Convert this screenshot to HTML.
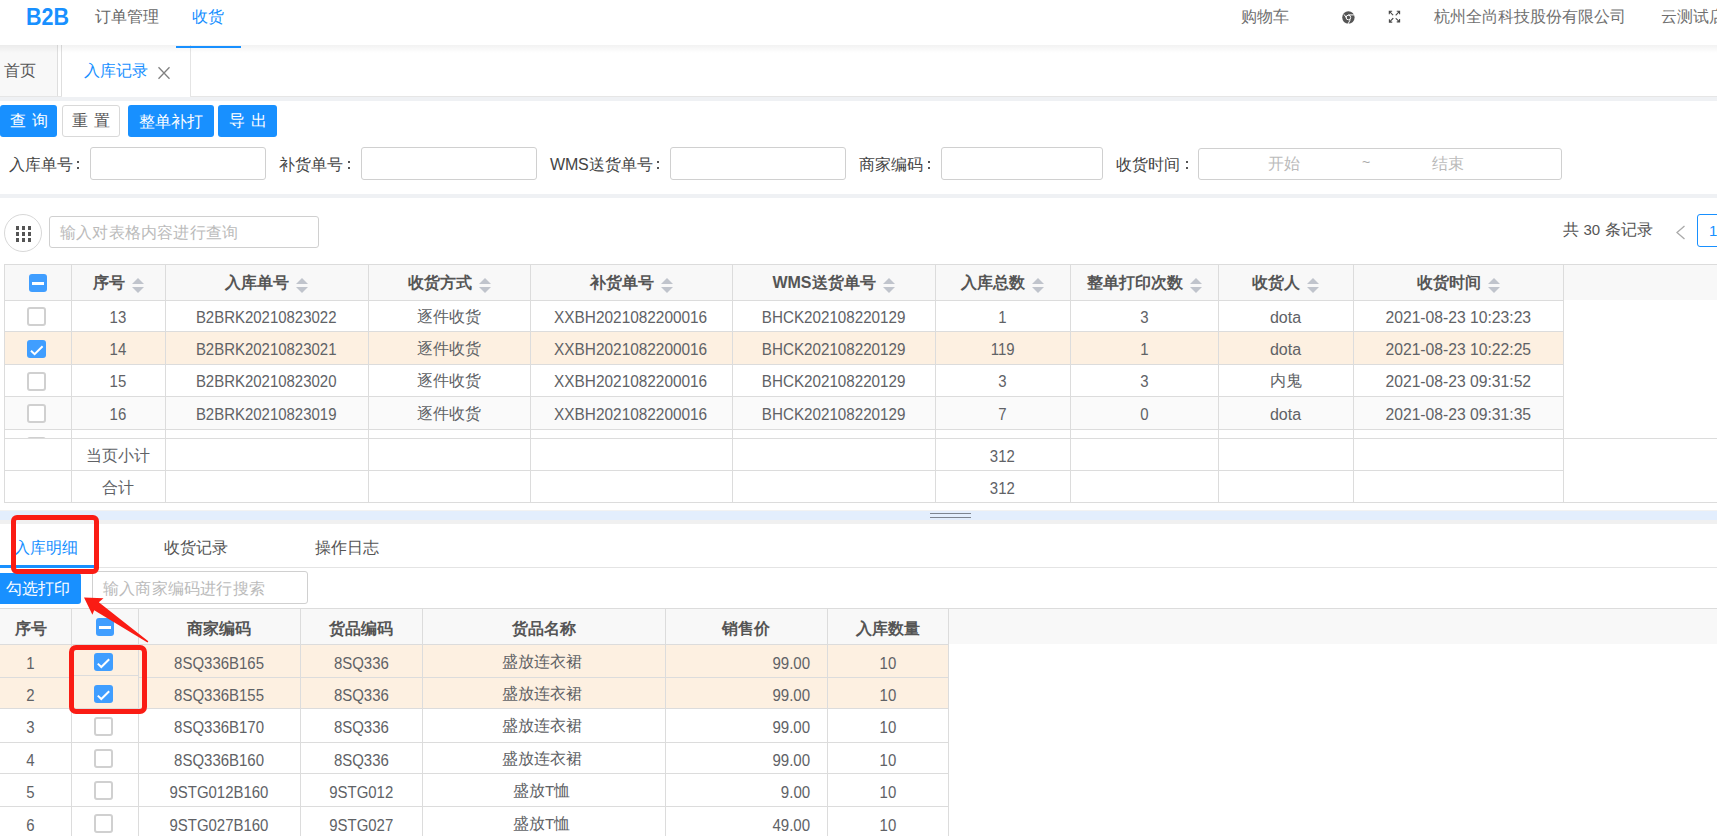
<!DOCTYPE html><html><head><meta charset="utf-8"><style>
html,body{margin:0;padding:0;}
body{width:1717px;height:836px;overflow:hidden;position:relative;background:#fff;font-family:"Liberation Sans",sans-serif;font-size:16px;color:#606266;}
.l{font-size:15px}
.sort{position:absolute;width:12px;height:15px}
.sort:before{content:"";position:absolute;left:0;top:0;border-left:6px solid transparent;border-right:6px solid transparent;border-bottom:6px solid #c0c4cc}
.sort:after{content:"";position:absolute;left:0;top:9px;border-left:6px solid transparent;border-right:6px solid transparent;border-top:6px solid #c0c4cc}
.cb{position:absolute;width:14.6px;height:14.6px;border:2px solid #d0d0d0;border-radius:3px;background:#fff}
.cbk{position:absolute;width:18px;height:18px;border-radius:3px;background:#409eff}
.cbm{position:absolute;width:18px;height:18px;border-radius:3px;background:#409eff}
.cbm:after{content:"";position:absolute;left:3px;top:8px;width:12px;height:3px;background:#fff}
</style></head><body>
<div style="position:absolute;left:26px;top:0px;width:60px;height:34px;line-height:34px;text-align:left;white-space:nowrap;font-weight:bold;font-size:23.5px;color:#1890ff;transform:scaleX(0.915);transform-origin:0 0;">B2B</div>
<div style="position:absolute;left:95px;top:0px;width:70px;height:33px;line-height:33px;text-align:left;white-space:nowrap;color:#666;">订单管理</div>
<div style="position:absolute;left:192px;top:0px;width:40px;height:33px;line-height:33px;text-align:left;white-space:nowrap;color:#1890ff;">收货</div>
<div style="position:absolute;left:1241px;top:0px;width:60px;height:33px;line-height:33px;text-align:left;white-space:nowrap;color:#707070;">购物车</div>
<div style="position:absolute;left:1434px;top:0px;width:200px;height:33px;line-height:33px;text-align:left;white-space:nowrap;color:#707070;">杭州全尚科技股份有限公司</div>
<div style="position:absolute;left:1661px;top:0px;width:80px;height:33px;line-height:33px;text-align:left;white-space:nowrap;color:#707070;">云测试店</div>
<svg style="position:absolute;left:1342px;top:10.5px" width="13" height="13" viewBox="0 0 13 13">
<circle cx="6.4" cy="6.5" r="6.2" fill="#555"/>
<circle cx="6.4" cy="6.5" r="2.3" fill="none" stroke="#fff" stroke-width="1"/>
<path d="M2 3.4 L4.6 6.9 M6.2 3.9 L12.6 3.9 M6.0 13 L8.3 8.6" stroke="#fff" stroke-width="1" fill="none"/>
</svg>
<svg style="position:absolute;left:1388px;top:10px" width="13" height="14" viewBox="0 0 13 14">
<g stroke="#4a4a4a" stroke-width="1.1" fill="none" stroke-linecap="square">
<path d="M1.6 1.6 L4.8 4.8 M1.3 1.3 L3.6 1.3 M1.3 1.3 L1.3 3.6"/>
<path d="M11.3 1.6 L8.1 4.9 M11.6 1.3 L9.3 1.3 M11.6 1.3 L11.6 3.6"/>
<path d="M1.7 11.8 L4.9 8.5 M1.4 12.1 L3.7 12.1 M1.4 12.1 L1.4 9.8"/>
<path d="M11.3 11.6 L8.1 8.7 M11.6 11.9 L9.3 11.9 M11.6 11.9 L11.6 9.6"/>
</g></svg>
<div style="position:absolute;left:0px;top:45px;width:1717px;height:51px;background:#fff;"></div>
<div style="position:absolute;left:0px;top:45px;width:57px;height:51px;background:#f8f8f8;"></div>
<div style="position:absolute;left:57px;top:45px;width:1px;height:51px;background:#dedede;"></div>
<div style="position:absolute;left:61px;top:45px;width:1px;height:51px;background:#dedede;"></div>
<div style="position:absolute;left:62px;top:45px;width:128px;height:51px;background:#fff;"></div>
<div style="position:absolute;left:190px;top:45px;width:1px;height:51px;background:#e4e4e4;"></div>
<div style="position:absolute;left:0px;top:45px;width:1717px;height:8px;background:linear-gradient(rgba(0,0,0,0.05),rgba(0,0,0,0));"></div>
<div style="position:absolute;left:176px;top:46px;width:65px;height:2px;background:#1890ff;"></div>
<div style="position:absolute;left:4px;top:45px;width:50px;height:51px;line-height:51px;text-align:left;white-space:nowrap;color:#555;">首页</div>
<div style="position:absolute;left:84px;top:45px;width:70px;height:51px;line-height:51px;text-align:left;white-space:nowrap;color:#1890ff;">入库记录</div>
<svg style="position:absolute;left:157px;top:66px" width="14" height="14" viewBox="0 0 14 14"><path d="M1.5 1.3 L12.5 12.7 M12.5 1.3 L1.5 12.7" stroke="#808080" stroke-width="1.3" fill="none"/></svg>
<div style="position:absolute;left:0px;top:97px;width:1717px;height:4px;background:#eff1f4;"></div>
<div style="position:absolute;left:0px;top:96px;width:62px;height:1px;background:#e6e6e6;"></div>
<div style="position:absolute;left:190px;top:96px;width:1527px;height:1px;background:#e6e6e6;"></div>
<div style="position:absolute;left:0px;top:105px;width:57px;height:32px;line-height:32px;background:#1890ff;border-radius:3px;color:#fff;text-align:center;letter-spacing:6px;text-indent:6px">查询</div>
<div style="position:absolute;left:62px;top:105px;width:56px;height:30px;line-height:30px;border:1px solid #d9d9d9;border-radius:3px;color:#555;text-align:center;letter-spacing:6px;text-indent:6px">重置</div>
<div style="position:absolute;left:128px;top:105px;width:86px;height:32px;line-height:32px;background:#1890ff;border-radius:3px;color:#fff;text-align:center;letter-spacing:0px;text-indent:0px"><span style="position:relative;top:1px">整单补打</span></div>
<div style="position:absolute;left:218px;top:105px;width:59px;height:32px;line-height:32px;background:#1890ff;border-radius:3px;color:#fff;text-align:center;letter-spacing:6px;text-indent:6px">导出</div>
<div style="position:absolute;left:9px;top:148px;width:120px;height:33px;line-height:33px;text-align:left;white-space:nowrap;color:#444;">入库单号</div>
<div style="position:absolute;left:77px;top:161px;width:2px;height:2px;background:#555;"></div>
<div style="position:absolute;left:77px;top:167px;width:2px;height:2px;background:#555;"></div>
<div style="position:absolute;left:90px;top:147px;width:174px;height:31px;border:1px solid #d0d0d0;border-radius:3px;background:#fff;"></div>
<div style="position:absolute;left:279px;top:148px;width:120px;height:33px;line-height:33px;text-align:left;white-space:nowrap;color:#444;">补货单号</div>
<div style="position:absolute;left:347.5px;top:161px;width:2px;height:2px;background:#555;"></div>
<div style="position:absolute;left:347.5px;top:167px;width:2px;height:2px;background:#555;"></div>
<div style="position:absolute;left:361px;top:147px;width:174px;height:31px;border:1px solid #d0d0d0;border-radius:3px;background:#fff;"></div>
<div style="position:absolute;left:550px;top:148px;width:120px;height:33px;line-height:33px;text-align:left;white-space:nowrap;color:#444;"><span style="letter-spacing:-0.2px">WMS</span>送货单号</div>
<div style="position:absolute;left:657px;top:161px;width:2px;height:2px;background:#555;"></div>
<div style="position:absolute;left:657px;top:167px;width:2px;height:2px;background:#555;"></div>
<div style="position:absolute;left:670px;top:147px;width:174px;height:31px;border:1px solid #d0d0d0;border-radius:3px;background:#fff;"></div>
<div style="position:absolute;left:859px;top:148px;width:120px;height:33px;line-height:33px;text-align:left;white-space:nowrap;color:#444;">商家编码</div>
<div style="position:absolute;left:928px;top:161px;width:2px;height:2px;background:#555;"></div>
<div style="position:absolute;left:928px;top:167px;width:2px;height:2px;background:#555;"></div>
<div style="position:absolute;left:941px;top:147px;width:160px;height:31px;border:1px solid #d0d0d0;border-radius:3px;background:#fff;"></div>
<div style="position:absolute;left:1116px;top:148px;width:120px;height:33px;line-height:33px;text-align:left;white-space:nowrap;color:#444;">收货时间</div>
<div style="position:absolute;left:1185.5px;top:161px;width:2px;height:2px;background:#555;"></div>
<div style="position:absolute;left:1185.5px;top:167px;width:2px;height:2px;background:#555;"></div>
<div style="position:absolute;left:1198px;top:148px;width:362px;height:30px;border:1px solid #d0d0d0;border-radius:3px;background:#fff;"></div>
<div style="position:absolute;left:1268px;top:148px;width:34px;height:32px;line-height:32px;text-align:left;white-space:nowrap;color:#bbb;">开始</div>
<div style="position:absolute;left:1362px;top:146px;width:14px;height:32px;line-height:32px;text-align:left;white-space:nowrap;color:#aaa;font-size:14px;">~</div>
<div style="position:absolute;left:1432px;top:148px;width:34px;height:32px;line-height:32px;text-align:left;white-space:nowrap;color:#bbb;">结束</div>
<div style="position:absolute;left:0px;top:194px;width:1717px;height:4px;background:#eff1f4;"></div>
<div style="position:absolute;left:4px;top:214px;width:36px;height:36px;border:1px solid #d8d8d8;border-radius:50%;"></div>
<div style="position:absolute;left:16px;top:226px;width:3px;height:4px;background:#555;"></div>
<div style="position:absolute;left:16px;top:232px;width:3px;height:4px;background:#555;"></div>
<div style="position:absolute;left:16px;top:238px;width:3px;height:4px;background:#555;"></div>
<div style="position:absolute;left:22px;top:226px;width:3px;height:4px;background:#555;"></div>
<div style="position:absolute;left:22px;top:232px;width:3px;height:4px;background:#555;"></div>
<div style="position:absolute;left:22px;top:238px;width:3px;height:4px;background:#555;"></div>
<div style="position:absolute;left:28px;top:226px;width:3px;height:4px;background:#555;"></div>
<div style="position:absolute;left:28px;top:232px;width:3px;height:4px;background:#555;"></div>
<div style="position:absolute;left:28px;top:238px;width:3px;height:4px;background:#555;"></div>
<div style="position:absolute;left:49px;top:216px;width:268px;height:30px;border:1px solid #d0d0d0;border-radius:3px;background:#fff;"></div>
<div style="position:absolute;left:60px;top:217px;width:200px;height:32px;line-height:32px;text-align:left;white-space:nowrap;color:#bbb;letter-spacing:0.2px;">输入对表格内容进行查询</div>
<div style="position:absolute;left:1563px;top:214px;width:100px;height:32px;line-height:32px;text-align:left;white-space:nowrap;color:#555;">共 <span class="l">30</span> 条记录</div>
<svg style="position:absolute;left:1675px;top:225px" width="11" height="15" viewBox="0 0 11 15"><path d="M9.5 1 L2 7.5 L9.5 14" stroke="#aaa" stroke-width="1.3" fill="none"/></svg>
<div style="position:absolute;left:1697px;top:214px;width:40px;height:31px;border:1px solid #1890ff;border-radius:3px;"></div>
<div style="position:absolute;left:1709px;top:214px;width:20px;height:33px;line-height:33px;text-align:left;white-space:nowrap;color:#1890ff;font-size:15px">1</div>
<div style="position:absolute;left:4px;top:264px;width:1713px;height:36px;background:#f8f8f8;"></div>
<div style="position:absolute;left:4px;top:331px;width:1559px;height:33px;background:#fdf0e1;"></div>
<div style="position:absolute;left:4px;top:396px;width:1559px;height:33px;background:#fafafa;"></div>
<div style="position:absolute;left:4px;top:264px;width:1713px;height:1px;background:#dcdcdc;"></div>
<div style="position:absolute;left:4px;top:300px;width:1559px;height:1px;background:#dcdcdc;"></div>
<div style="position:absolute;left:4px;top:331px;width:1559px;height:1px;background:#dcdcdc;"></div>
<div style="position:absolute;left:4px;top:364px;width:1559px;height:1px;background:#dcdcdc;"></div>
<div style="position:absolute;left:4px;top:396px;width:1559px;height:1px;background:#dcdcdc;"></div>
<div style="position:absolute;left:4px;top:429px;width:1559px;height:1px;background:#dcdcdc;"></div>
<div style="position:absolute;left:4px;top:438px;width:1713px;height:1px;background:#dcdcdc;"></div>
<div style="position:absolute;left:4px;top:470px;width:1559px;height:1px;background:#dcdcdc;"></div>
<div style="position:absolute;left:4px;top:502px;width:1713px;height:1px;background:#dcdcdc;"></div>
<div style="position:absolute;left:4px;top:264px;width:1px;height:239px;background:#dcdcdc;"></div>
<div style="position:absolute;left:71px;top:264px;width:1px;height:239px;background:#dcdcdc;"></div>
<div style="position:absolute;left:165px;top:264px;width:1px;height:239px;background:#dcdcdc;"></div>
<div style="position:absolute;left:368px;top:264px;width:1px;height:239px;background:#dcdcdc;"></div>
<div style="position:absolute;left:530px;top:264px;width:1px;height:239px;background:#dcdcdc;"></div>
<div style="position:absolute;left:732px;top:264px;width:1px;height:239px;background:#dcdcdc;"></div>
<div style="position:absolute;left:935px;top:264px;width:1px;height:239px;background:#dcdcdc;"></div>
<div style="position:absolute;left:1070px;top:264px;width:1px;height:239px;background:#dcdcdc;"></div>
<div style="position:absolute;left:1218px;top:264px;width:1px;height:239px;background:#dcdcdc;"></div>
<div style="position:absolute;left:1353px;top:264px;width:1px;height:239px;background:#dcdcdc;"></div>
<div style="position:absolute;left:1563px;top:264px;width:1px;height:239px;background:#dcdcdc;"></div>
<div style="position:absolute;left:71px;top:265px;width:94px;height:36px;line-height:36px;text-align:center;white-space:nowrap;font-weight:bold;color:#555;">序号<span style="display:inline-block;position:relative;width:12px;height:15px;margin-left:7px;vertical-align:-5px"><span class="sort" style="left:0;top:0"></span></span></div>
<div style="position:absolute;left:165px;top:265px;width:203px;height:36px;line-height:36px;text-align:center;white-space:nowrap;font-weight:bold;color:#555;">入库单号<span style="display:inline-block;position:relative;width:12px;height:15px;margin-left:7px;vertical-align:-5px"><span class="sort" style="left:0;top:0"></span></span></div>
<div style="position:absolute;left:368px;top:265px;width:162px;height:36px;line-height:36px;text-align:center;white-space:nowrap;font-weight:bold;color:#555;">收货方式<span style="display:inline-block;position:relative;width:12px;height:15px;margin-left:7px;vertical-align:-5px"><span class="sort" style="left:0;top:0"></span></span></div>
<div style="position:absolute;left:530px;top:265px;width:202px;height:36px;line-height:36px;text-align:center;white-space:nowrap;font-weight:bold;color:#555;">补货单号<span style="display:inline-block;position:relative;width:12px;height:15px;margin-left:7px;vertical-align:-5px"><span class="sort" style="left:0;top:0"></span></span></div>
<div style="position:absolute;left:732px;top:265px;width:203px;height:36px;line-height:36px;text-align:center;white-space:nowrap;font-weight:bold;color:#555;"><span style="font-size:16px">WMS</span>送货单号<span style="display:inline-block;position:relative;width:12px;height:15px;margin-left:7px;vertical-align:-5px"><span class="sort" style="left:0;top:0"></span></span></div>
<div style="position:absolute;left:935px;top:265px;width:135px;height:36px;line-height:36px;text-align:center;white-space:nowrap;font-weight:bold;color:#555;">入库总数<span style="display:inline-block;position:relative;width:12px;height:15px;margin-left:7px;vertical-align:-5px"><span class="sort" style="left:0;top:0"></span></span></div>
<div style="position:absolute;left:1070px;top:265px;width:148px;height:36px;line-height:36px;text-align:center;white-space:nowrap;font-weight:bold;color:#555;">整单打印次数<span style="display:inline-block;position:relative;width:12px;height:15px;margin-left:7px;vertical-align:-5px"><span class="sort" style="left:0;top:0"></span></span></div>
<div style="position:absolute;left:1218px;top:265px;width:135px;height:36px;line-height:36px;text-align:center;white-space:nowrap;font-weight:bold;color:#555;">收货人<span style="display:inline-block;position:relative;width:12px;height:15px;margin-left:7px;vertical-align:-5px"><span class="sort" style="left:0;top:0"></span></span></div>
<div style="position:absolute;left:1353px;top:265px;width:210px;height:36px;line-height:36px;text-align:center;white-space:nowrap;font-weight:bold;color:#555;">收货时间<span style="display:inline-block;position:relative;width:12px;height:15px;margin-left:7px;vertical-align:-5px"><span class="sort" style="left:0;top:0"></span></span></div>
<div class="cbm" style="left:29px;top:274px"></div>
<div style="position:absolute;left:71px;top:301.5px;width:94px;height:31px;line-height:31px;text-align:center;white-space:nowrap;"><span style="display:inline-block;transform:scaleX(0.935)">13</span></div>
<div style="position:absolute;left:165px;top:301.5px;width:203px;height:31px;line-height:31px;text-align:center;white-space:nowrap;"><span style="display:inline-block;transform:scaleX(0.935)">B2BRK20210823022</span></div>
<div style="position:absolute;left:368px;top:301px;width:162px;height:31px;line-height:31px;text-align:center;white-space:nowrap;">逐件收货</div>
<div style="position:absolute;left:530px;top:301.5px;width:202px;height:31px;line-height:31px;text-align:center;white-space:nowrap;"><span style="display:inline-block;transform:scaleX(0.961)">XXBH2021082200016</span></div>
<div style="position:absolute;left:732px;top:301.5px;width:203px;height:31px;line-height:31px;text-align:center;white-space:nowrap;"><span style="display:inline-block;transform:scaleX(0.949)">BHCK202108220129</span></div>
<div style="position:absolute;left:935px;top:301.5px;width:135px;height:31px;line-height:31px;text-align:center;white-space:nowrap;"><span style="display:inline-block;transform:scaleX(0.935)">1</span></div>
<div style="position:absolute;left:1070px;top:301.5px;width:148px;height:31px;line-height:31px;text-align:center;white-space:nowrap;"><span style="display:inline-block;transform:scaleX(0.935)">3</span></div>
<div style="position:absolute;left:1218px;top:301.5px;width:135px;height:31px;line-height:31px;text-align:center;white-space:nowrap;"><span style="display:inline-block;transform:scaleX(1.0)">dota</span></div>
<div style="position:absolute;left:1353px;top:301.5px;width:210px;height:31px;line-height:31px;text-align:center;white-space:nowrap;"><span style="display:inline-block;transform:scaleX(0.98)">2021-08-23 10:23:23</span></div>
<div class="cb" style="left:27px;top:307px"></div>
<div style="position:absolute;left:71px;top:332.5px;width:94px;height:33px;line-height:33px;text-align:center;white-space:nowrap;"><span style="display:inline-block;transform:scaleX(0.935)">14</span></div>
<div style="position:absolute;left:165px;top:332.5px;width:203px;height:33px;line-height:33px;text-align:center;white-space:nowrap;"><span style="display:inline-block;transform:scaleX(0.935)">B2BRK20210823021</span></div>
<div style="position:absolute;left:368px;top:332px;width:162px;height:33px;line-height:33px;text-align:center;white-space:nowrap;">逐件收货</div>
<div style="position:absolute;left:530px;top:332.5px;width:202px;height:33px;line-height:33px;text-align:center;white-space:nowrap;"><span style="display:inline-block;transform:scaleX(0.961)">XXBH2021082200016</span></div>
<div style="position:absolute;left:732px;top:332.5px;width:203px;height:33px;line-height:33px;text-align:center;white-space:nowrap;"><span style="display:inline-block;transform:scaleX(0.949)">BHCK202108220129</span></div>
<div style="position:absolute;left:935px;top:332.5px;width:135px;height:33px;line-height:33px;text-align:center;white-space:nowrap;"><span style="display:inline-block;transform:scaleX(0.935)">119</span></div>
<div style="position:absolute;left:1070px;top:332.5px;width:148px;height:33px;line-height:33px;text-align:center;white-space:nowrap;"><span style="display:inline-block;transform:scaleX(0.935)">1</span></div>
<div style="position:absolute;left:1218px;top:332.5px;width:135px;height:33px;line-height:33px;text-align:center;white-space:nowrap;"><span style="display:inline-block;transform:scaleX(1.0)">dota</span></div>
<div style="position:absolute;left:1353px;top:332.5px;width:210px;height:33px;line-height:33px;text-align:center;white-space:nowrap;"><span style="display:inline-block;transform:scaleX(0.98)">2021-08-23 10:22:25</span></div>
<div class="cbk" style="left:27px;top:340px;width:19px"><svg width="19" height="18" style="position:absolute;left:0;top:0"><path d="M4 10.8 L7.6 14.2 L15.6 6.2" stroke="#fff" stroke-width="2" fill="none"/></svg></div>
<div style="position:absolute;left:71px;top:365.5px;width:94px;height:32px;line-height:32px;text-align:center;white-space:nowrap;"><span style="display:inline-block;transform:scaleX(0.935)">15</span></div>
<div style="position:absolute;left:165px;top:365.5px;width:203px;height:32px;line-height:32px;text-align:center;white-space:nowrap;"><span style="display:inline-block;transform:scaleX(0.935)">B2BRK20210823020</span></div>
<div style="position:absolute;left:368px;top:365px;width:162px;height:32px;line-height:32px;text-align:center;white-space:nowrap;">逐件收货</div>
<div style="position:absolute;left:530px;top:365.5px;width:202px;height:32px;line-height:32px;text-align:center;white-space:nowrap;"><span style="display:inline-block;transform:scaleX(0.961)">XXBH2021082200016</span></div>
<div style="position:absolute;left:732px;top:365.5px;width:203px;height:32px;line-height:32px;text-align:center;white-space:nowrap;"><span style="display:inline-block;transform:scaleX(0.949)">BHCK202108220129</span></div>
<div style="position:absolute;left:935px;top:365.5px;width:135px;height:32px;line-height:32px;text-align:center;white-space:nowrap;"><span style="display:inline-block;transform:scaleX(0.935)">3</span></div>
<div style="position:absolute;left:1070px;top:365.5px;width:148px;height:32px;line-height:32px;text-align:center;white-space:nowrap;"><span style="display:inline-block;transform:scaleX(0.935)">3</span></div>
<div style="position:absolute;left:1218px;top:365px;width:135px;height:32px;line-height:32px;text-align:center;white-space:nowrap;">内鬼</div>
<div style="position:absolute;left:1353px;top:365.5px;width:210px;height:32px;line-height:32px;text-align:center;white-space:nowrap;"><span style="display:inline-block;transform:scaleX(0.98)">2021-08-23 09:31:52</span></div>
<div class="cb" style="left:27px;top:372px"></div>
<div style="position:absolute;left:71px;top:397.5px;width:94px;height:33px;line-height:33px;text-align:center;white-space:nowrap;"><span style="display:inline-block;transform:scaleX(0.935)">16</span></div>
<div style="position:absolute;left:165px;top:397.5px;width:203px;height:33px;line-height:33px;text-align:center;white-space:nowrap;"><span style="display:inline-block;transform:scaleX(0.935)">B2BRK20210823019</span></div>
<div style="position:absolute;left:368px;top:397px;width:162px;height:33px;line-height:33px;text-align:center;white-space:nowrap;">逐件收货</div>
<div style="position:absolute;left:530px;top:397.5px;width:202px;height:33px;line-height:33px;text-align:center;white-space:nowrap;"><span style="display:inline-block;transform:scaleX(0.961)">XXBH2021082200016</span></div>
<div style="position:absolute;left:732px;top:397.5px;width:203px;height:33px;line-height:33px;text-align:center;white-space:nowrap;"><span style="display:inline-block;transform:scaleX(0.949)">BHCK202108220129</span></div>
<div style="position:absolute;left:935px;top:397.5px;width:135px;height:33px;line-height:33px;text-align:center;white-space:nowrap;"><span style="display:inline-block;transform:scaleX(0.935)">7</span></div>
<div style="position:absolute;left:1070px;top:397.5px;width:148px;height:33px;line-height:33px;text-align:center;white-space:nowrap;"><span style="display:inline-block;transform:scaleX(0.935)">0</span></div>
<div style="position:absolute;left:1218px;top:397.5px;width:135px;height:33px;line-height:33px;text-align:center;white-space:nowrap;"><span style="display:inline-block;transform:scaleX(1.0)">dota</span></div>
<div style="position:absolute;left:1353px;top:397.5px;width:210px;height:33px;line-height:33px;text-align:center;white-space:nowrap;"><span style="display:inline-block;transform:scaleX(0.98)">2021-08-23 09:31:35</span></div>
<div class="cb" style="left:27px;top:404px"></div>
<div style="position:absolute;left:4px;top:430px;width:1559px;height:8px;overflow:hidden"><div class="cb" style="left:23px;top:7px"></div></div>
<div style="position:absolute;left:71px;top:440px;width:94px;height:32px;line-height:32px;text-align:center;white-space:nowrap;">当页小计</div>
<div style="position:absolute;left:935px;top:440.5px;width:135px;height:32px;line-height:32px;text-align:center;white-space:nowrap;"><span style="display:inline-block;transform:scaleX(0.935)">312</span></div>
<div style="position:absolute;left:71px;top:472px;width:94px;height:32px;line-height:32px;text-align:center;white-space:nowrap;">合计</div>
<div style="position:absolute;left:935px;top:472.5px;width:135px;height:32px;line-height:32px;text-align:center;white-space:nowrap;"><span style="display:inline-block;transform:scaleX(0.935)">312</span></div>
<div style="position:absolute;left:0px;top:510px;width:1717px;height:1px;background:#f2f2f2;"></div>
<div style="position:absolute;left:0px;top:511px;width:1717px;height:9px;background:#e3eefd;"></div>
<div style="position:absolute;left:0px;top:520px;width:1717px;height:4px;background:#f0f0f0;"></div>
<div style="position:absolute;left:930px;top:513px;width:41px;height:1px;background:#7d8590;"></div>
<div style="position:absolute;left:930px;top:517px;width:41px;height:1px;background:#7d8590;"></div>
<div style="position:absolute;left:14px;top:526px;width:70px;height:44px;line-height:44px;text-align:left;white-space:nowrap;color:#1890ff;">入库明细</div>
<div style="position:absolute;left:164px;top:526px;width:70px;height:44px;line-height:44px;text-align:left;white-space:nowrap;color:#555;">收货记录</div>
<div style="position:absolute;left:315px;top:526px;width:70px;height:44px;line-height:44px;text-align:left;white-space:nowrap;color:#555;">操作日志</div>
<div style="position:absolute;left:0px;top:567px;width:1717px;height:1px;background:#e4e4e4;"></div>
<div style="position:absolute;left:0px;top:565px;width:95px;height:3px;background:#1890ff;"></div>
<div style="position:absolute;left:0;top:573px;width:81px;height:31px;line-height:31px;background:#1890ff;border-radius:0 3px 3px 0;color:#fff;text-align:left;text-indent:6px">勾选打印</div>
<div style="position:absolute;left:92px;top:571px;width:214px;height:31px;border:1px solid #d0d0d0;border-radius:3px;background:#fff;"></div>
<div style="position:absolute;left:103px;top:572px;width:200px;height:33px;line-height:33px;text-align:left;white-space:nowrap;color:#bbb;letter-spacing:0.2px;">输入商家编码进行搜索</div>
<div style="position:absolute;left:0px;top:608px;width:1717px;height:36px;background:#f8f8f8;"></div>
<div style="position:absolute;left:0px;top:644px;width:948px;height:64px;background:#fdf0e1;"></div>
<div style="position:absolute;left:0px;top:608px;width:1717px;height:1px;background:#dcdcdc;"></div>
<div style="position:absolute;left:0px;top:644px;width:948px;height:1px;background:#dcdcdc;"></div>
<div style="position:absolute;left:0px;top:677px;width:948px;height:1px;background:#dcdcdc;"></div>
<div style="position:absolute;left:0px;top:708px;width:948px;height:1px;background:#dcdcdc;"></div>
<div style="position:absolute;left:0px;top:742px;width:948px;height:1px;background:#dcdcdc;"></div>
<div style="position:absolute;left:0px;top:773px;width:948px;height:1px;background:#dcdcdc;"></div>
<div style="position:absolute;left:0px;top:806px;width:948px;height:1px;background:#dcdcdc;"></div>
<div style="position:absolute;left:71px;top:608px;width:1px;height:230px;background:#dcdcdc;"></div>
<div style="position:absolute;left:138px;top:608px;width:1px;height:230px;background:#dcdcdc;"></div>
<div style="position:absolute;left:300px;top:608px;width:1px;height:230px;background:#dcdcdc;"></div>
<div style="position:absolute;left:422px;top:608px;width:1px;height:230px;background:#dcdcdc;"></div>
<div style="position:absolute;left:665px;top:608px;width:1px;height:230px;background:#dcdcdc;"></div>
<div style="position:absolute;left:827px;top:608px;width:1px;height:230px;background:#dcdcdc;"></div>
<div style="position:absolute;left:948px;top:608px;width:1px;height:230px;background:#dcdcdc;"></div>
<div style="position:absolute;left:0px;top:611px;width:62px;height:36px;line-height:36px;text-align:center;white-space:nowrap;font-weight:bold;color:#555;">序号</div>
<div style="position:absolute;left:138px;top:611px;width:162px;height:36px;line-height:36px;text-align:center;white-space:nowrap;font-weight:bold;color:#555;">商家编码</div>
<div style="position:absolute;left:300px;top:611px;width:122px;height:36px;line-height:36px;text-align:center;white-space:nowrap;font-weight:bold;color:#555;">货品编码</div>
<div style="position:absolute;left:422px;top:611px;width:243px;height:36px;line-height:36px;text-align:center;white-space:nowrap;font-weight:bold;color:#555;">货品名称</div>
<div style="position:absolute;left:665px;top:611px;width:162px;height:36px;line-height:36px;text-align:center;white-space:nowrap;font-weight:bold;color:#555;">销售价</div>
<div style="position:absolute;left:827px;top:611px;width:121px;height:36px;line-height:36px;text-align:center;white-space:nowrap;font-weight:bold;color:#555;">入库数量</div>
<div class="cbm" style="left:96px;top:618px"></div>
<div style="position:absolute;left:0px;top:646.5px;width:60px;height:33px;line-height:33px;text-align:center;white-space:nowrap;"><span style="display:inline-block;transform:scaleX(0.935)">1</span></div>
<div style="position:absolute;left:138px;top:646.5px;width:162px;height:33px;line-height:33px;text-align:center;white-space:nowrap;"><span style="display:inline-block;transform:scaleX(0.935)">8SQ336B165</span></div>
<div style="position:absolute;left:300px;top:646.5px;width:122px;height:33px;line-height:33px;text-align:center;white-space:nowrap;"><span style="display:inline-block;transform:scaleX(0.935)">8SQ336</span></div>
<div style="position:absolute;left:420px;top:645px;width:243px;height:33px;line-height:33px;text-align:center;white-space:nowrap;">盛放连衣裙</div>
<div style="position:absolute;left:665px;top:646.5px;width:145px;height:33px;line-height:33px;text-align:right;white-space:nowrap;"><span style="display:inline-block;transform:scaleX(0.94);transform-origin:100% 50%">99.00</span></div>
<div style="position:absolute;left:827px;top:646.5px;width:121px;height:33px;line-height:33px;text-align:center;white-space:nowrap;"><span style="display:inline-block;transform:scaleX(0.935)">10</span></div>
<div class="cbk" style="left:94px;top:653px;width:19px"><svg width="18" height="18" style="position:absolute;left:0;top:0"><path d="M3.8 10.6 L7.3 14 L15.2 6.2" stroke="#fff" stroke-width="2" fill="none"/></svg></div>
<div style="position:absolute;left:0px;top:679.5px;width:60px;height:31px;line-height:31px;text-align:center;white-space:nowrap;"><span style="display:inline-block;transform:scaleX(0.935)">2</span></div>
<div style="position:absolute;left:138px;top:679.5px;width:162px;height:31px;line-height:31px;text-align:center;white-space:nowrap;"><span style="display:inline-block;transform:scaleX(0.935)">8SQ336B155</span></div>
<div style="position:absolute;left:300px;top:679.5px;width:122px;height:31px;line-height:31px;text-align:center;white-space:nowrap;"><span style="display:inline-block;transform:scaleX(0.935)">8SQ336</span></div>
<div style="position:absolute;left:420px;top:678px;width:243px;height:31px;line-height:31px;text-align:center;white-space:nowrap;">盛放连衣裙</div>
<div style="position:absolute;left:665px;top:679.5px;width:145px;height:31px;line-height:31px;text-align:right;white-space:nowrap;"><span style="display:inline-block;transform:scaleX(0.94);transform-origin:100% 50%">99.00</span></div>
<div style="position:absolute;left:827px;top:679.5px;width:121px;height:31px;line-height:31px;text-align:center;white-space:nowrap;"><span style="display:inline-block;transform:scaleX(0.935)">10</span></div>
<div class="cbk" style="left:94px;top:685px;width:19px"><svg width="18" height="18" style="position:absolute;left:0;top:0"><path d="M3.8 10.6 L7.3 14 L15.2 6.2" stroke="#fff" stroke-width="2" fill="none"/></svg></div>
<div style="position:absolute;left:0px;top:710.5px;width:60px;height:34px;line-height:34px;text-align:center;white-space:nowrap;"><span style="display:inline-block;transform:scaleX(0.935)">3</span></div>
<div style="position:absolute;left:138px;top:710.5px;width:162px;height:34px;line-height:34px;text-align:center;white-space:nowrap;"><span style="display:inline-block;transform:scaleX(0.935)">8SQ336B170</span></div>
<div style="position:absolute;left:300px;top:710.5px;width:122px;height:34px;line-height:34px;text-align:center;white-space:nowrap;"><span style="display:inline-block;transform:scaleX(0.935)">8SQ336</span></div>
<div style="position:absolute;left:420px;top:709px;width:243px;height:34px;line-height:34px;text-align:center;white-space:nowrap;">盛放连衣裙</div>
<div style="position:absolute;left:665px;top:710.5px;width:145px;height:34px;line-height:34px;text-align:right;white-space:nowrap;"><span style="display:inline-block;transform:scaleX(0.94);transform-origin:100% 50%">99.00</span></div>
<div style="position:absolute;left:827px;top:710.5px;width:121px;height:34px;line-height:34px;text-align:center;white-space:nowrap;"><span style="display:inline-block;transform:scaleX(0.935)">10</span></div>
<div class="cb" style="left:94px;top:717px"></div>
<div style="position:absolute;left:0px;top:744.5px;width:60px;height:31px;line-height:31px;text-align:center;white-space:nowrap;"><span style="display:inline-block;transform:scaleX(0.935)">4</span></div>
<div style="position:absolute;left:138px;top:744.5px;width:162px;height:31px;line-height:31px;text-align:center;white-space:nowrap;"><span style="display:inline-block;transform:scaleX(0.935)">8SQ336B160</span></div>
<div style="position:absolute;left:300px;top:744.5px;width:122px;height:31px;line-height:31px;text-align:center;white-space:nowrap;"><span style="display:inline-block;transform:scaleX(0.935)">8SQ336</span></div>
<div style="position:absolute;left:420px;top:743px;width:243px;height:31px;line-height:31px;text-align:center;white-space:nowrap;">盛放连衣裙</div>
<div style="position:absolute;left:665px;top:744.5px;width:145px;height:31px;line-height:31px;text-align:right;white-space:nowrap;"><span style="display:inline-block;transform:scaleX(0.94);transform-origin:100% 50%">99.00</span></div>
<div style="position:absolute;left:827px;top:744.5px;width:121px;height:31px;line-height:31px;text-align:center;white-space:nowrap;"><span style="display:inline-block;transform:scaleX(0.935)">10</span></div>
<div class="cb" style="left:94px;top:749px"></div>
<div style="position:absolute;left:0px;top:775.5px;width:60px;height:33px;line-height:33px;text-align:center;white-space:nowrap;"><span style="display:inline-block;transform:scaleX(0.935)">5</span></div>
<div style="position:absolute;left:138px;top:775.5px;width:162px;height:33px;line-height:33px;text-align:center;white-space:nowrap;"><span style="display:inline-block;transform:scaleX(0.935)">9STG012B160</span></div>
<div style="position:absolute;left:300px;top:775.5px;width:122px;height:33px;line-height:33px;text-align:center;white-space:nowrap;"><span style="display:inline-block;transform:scaleX(0.935)">9STG012</span></div>
<div style="position:absolute;left:420px;top:774px;width:243px;height:33px;line-height:33px;text-align:center;white-space:nowrap;">盛放<span class="l">T</span>恤</div>
<div style="position:absolute;left:665px;top:775.5px;width:145px;height:33px;line-height:33px;text-align:right;white-space:nowrap;"><span style="display:inline-block;transform:scaleX(0.94);transform-origin:100% 50%">9.00</span></div>
<div style="position:absolute;left:827px;top:775.5px;width:121px;height:33px;line-height:33px;text-align:center;white-space:nowrap;"><span style="display:inline-block;transform:scaleX(0.935)">10</span></div>
<div class="cb" style="left:94px;top:781px"></div>
<div style="position:absolute;left:0px;top:808.5px;width:60px;height:33px;line-height:33px;text-align:center;white-space:nowrap;"><span style="display:inline-block;transform:scaleX(0.935)">6</span></div>
<div style="position:absolute;left:138px;top:808.5px;width:162px;height:33px;line-height:33px;text-align:center;white-space:nowrap;"><span style="display:inline-block;transform:scaleX(0.935)">9STG027B160</span></div>
<div style="position:absolute;left:300px;top:808.5px;width:122px;height:33px;line-height:33px;text-align:center;white-space:nowrap;"><span style="display:inline-block;transform:scaleX(0.935)">9STG027</span></div>
<div style="position:absolute;left:420px;top:807px;width:243px;height:33px;line-height:33px;text-align:center;white-space:nowrap;">盛放<span class="l">T</span>恤</div>
<div style="position:absolute;left:665px;top:808.5px;width:145px;height:33px;line-height:33px;text-align:right;white-space:nowrap;"><span style="display:inline-block;transform:scaleX(0.94);transform-origin:100% 50%">49.00</span></div>
<div style="position:absolute;left:827px;top:808.5px;width:121px;height:33px;line-height:33px;text-align:center;white-space:nowrap;"><span style="display:inline-block;transform:scaleX(0.935)">10</span></div>
<div class="cb" style="left:94px;top:814px"></div>
<div style="position:absolute;left:74px;top:650px;width:64px;height:59px;background:#fdf0e1;"></div>
<div style="position:absolute;left:74px;top:675px;width:64px;height:1px;background:#dcdcdc;"></div>
<div style="position:absolute;left:74px;top:708px;width:64px;height:1px;background:#dcdcdc;"></div>
<div style="position:absolute;left:138px;top:650px;width:1px;height:59px;background:#dcdcdc;"></div>
<div class="cbk" style="left:94px;top:653px;width:19px"><svg width="19" height="18" style="position:absolute;left:0;top:0"><path d="M3.8 10.6 L7.3 14 L15.2 6.2" stroke="#fff" stroke-width="2" fill="none"/></svg></div>
<div class="cbk" style="left:94px;top:685px;width:19px"><svg width="19" height="18" style="position:absolute;left:0;top:0"><path d="M3.8 10.6 L7.3 14 L15.2 6.2" stroke="#fff" stroke-width="2" fill="none"/></svg></div>
<div style="position:absolute;left:11px;top:515px;width:78px;height:49px;border:5px solid #fa1c14;border-radius:6px"></div>
<div style="position:absolute;left:69px;top:645px;width:68px;height:59px;border:5px solid #fa1c14;border-radius:7px"></div>
<svg style="position:absolute;left:0;top:0" width="200" height="700"><polygon points="84,597.6 103.5,598.2 98.8,602.3 148.3,641.3 147.5,642.5 94.2,610.2 92.4,614.8" fill="#fa1c14"/></svg>
</body></html>
